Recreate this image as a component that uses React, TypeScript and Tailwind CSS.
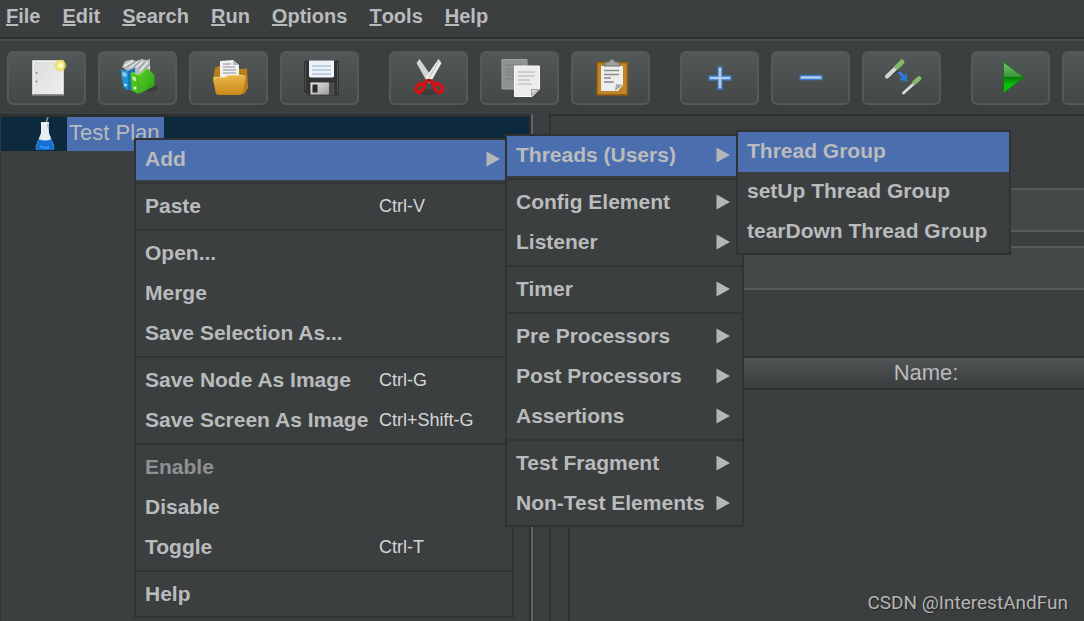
import { Fragment, type ReactNode } from 'react';

type MenuEntry = {
  label: string;
  shortcut?: string;
  submenu?: boolean;
  active?: boolean;
  disabled?: boolean;
};

const menuBar = ['File', 'Edit', 'Search', 'Run', 'Options', 'Tools', 'Help'];

// Each inner array is a block of entries; blocks are divided by a separator
const contextMenu: MenuEntry[][] = [
  [{ label: 'Add', submenu: true, active: true }],
  [{ label: 'Paste', shortcut: 'Ctrl-V' }],
  [{ label: 'Open...' }, { label: 'Merge' }, { label: 'Save Selection As...' }],
  [
    { label: 'Save Node As Image', shortcut: 'Ctrl-G' },
    { label: 'Save Screen As Image', shortcut: 'Ctrl+Shift-G' }
  ],
  [{ label: 'Enable', disabled: true }, { label: 'Disable' }, { label: 'Toggle', shortcut: 'Ctrl-T' }],
  [{ label: 'Help' }]
];

const addMenu: MenuEntry[][] = [
  [{ label: 'Threads (Users)', submenu: true, active: true }],
  [{ label: 'Config Element', submenu: true }, { label: 'Listener', submenu: true }],
  [{ label: 'Timer', submenu: true }],
  [
    { label: 'Pre Processors', submenu: true },
    { label: 'Post Processors', submenu: true },
    { label: 'Assertions', submenu: true }
  ],
  [{ label: 'Test Fragment', submenu: true }, { label: 'Non-Test Elements', submenu: true }]
];

const threadsMenu: MenuEntry[][] = [
  [{ label: 'Thread Group', active: true }, { label: 'setUp Thread Group' }, { label: 'tearDown Thread Group' }]
];

function Icon({ children }: { children: ReactNode }) {
  return (
    <svg viewBox="0 0 40 40" className="w-10 h-10" fill="none" aria-hidden="true">
      {children}
    </svg>
  );
}

const newIcon = (
  <Icon>
    <defs>
      <linearGradient id="page" x1="0" y1="0" x2="1" y2="1">
        <stop offset="0" stopColor="#dcdcdc" />
        <stop offset="1" stopColor="#f0f0f0" />
      </linearGradient>
      <radialGradient id="glow">
        <stop offset="0" stopColor="#ffffff" />
        <stop offset="0.35" stopColor="#fbf6a0" />
        <stop offset="0.7" stopColor="#e8dc4a" stopOpacity="0.85" />
        <stop offset="1" stopColor="#d8cc40" stopOpacity="0" />
      </radialGradient>
    </defs>
    <path d="M6 3h30v33.5H6z" fill="url(#page)" stroke="#f8f8f6" strokeWidth="1.5" />
    <path d="M5.5 36.5h31" stroke="#8d8f8e" />
    <circle cx="9.5" cy="15" r="1" fill="#888" />
    <circle cx="9.5" cy="23.5" r="1" fill="#888" />
    <circle cx="33.5" cy="7.5" r="6.5" fill="url(#glow)" />
  </Icon>
);

const templatesIcon = (
  <Icon>
    <defs>
      <linearGradient id="binder" x1="0" y1="0" x2="1" y2="1">
        <stop offset="0" stopColor="#5cd32a" />
        <stop offset="1" stopColor="#2b9a10" />
      </linearGradient>
    </defs>
    <ellipse cx="33" cy="30" rx="7" ry="4" fill="#2f3333" opacity="0.6" />
    <path d="M4 9l3-6 7-1.500 4 1.500 6-2 4 1 4-1v18L12 15z" fill="#b4b9ba" />
    <path d="M6 8l9-5M11 10l9-6M18 10l7-7M22 13l8-9M26 15l6-6" stroke="#e9ecec" strokeWidth="1.500" />
    <path d="M9 9l8-5M16 8l5-4M20 11l6-6M25 13l6-7" stroke="#8d9496" strokeWidth="0.800" />
    <path d="M2.500 11.500l8 1.500v19.500l-5-3z" fill="#2292d6" />
    <path d="M10 13l7-3.500v15L12 33l-2-1z" fill="#1873b2" />
    <path d="M4.500 14l4 1v4l-4-1z" fill="#8fcdf0" />
    <circle cx="7.500" cy="27" r="1.300" fill="#d8effb" />
    <path d="M12.500 16q0-2 2-1.500l6 2.500v19l-7-3.500z" fill="#46c41c" />
    <path d="M20.500 17L28 11q1-1 2.500 0l5 5q1 1 1 3v9l-16 8z" fill="url(#binder)" />
    <path d="M14 14.500l6.500 2.500L29 10.500" stroke="#86e65c" />
    <path d="M14.500 18l3.500 1.500v4L14.500 22z" fill="#b5f098" />
    <circle cx="17" cy="30" r="1.500" fill="#e7fbdc" />
  </Icon>
);

const openIcon = (
  <Icon>
    <defs>
      <linearGradient id="folder" x1="0" y1="0" x2="0" y2="1">
        <stop offset="0" stopColor="#ebb64a" />
        <stop offset="1" stopColor="#c98a18" />
      </linearGradient>
    </defs>
    <path d="M6 10l6-3 3 4h20l3-1 1 20-4 6H8L4 22z" fill="#b97f1b" />
    <path d="M11 3l13-1 6 5v16H11z" fill="#f1f1f1" />
    <path d="M24 2v5h6z" fill="#b9bcbc" />
    <path d="M14 6h8M14 9h12M14 12h13M14 15h13" stroke="#8c8f90" />
    <path d="M4 21q0-2 2-2h9q2 0 3-1l2-1h14q3 0 2.500 3L34 34q-1 3-3 3H10q-3 0-3.500-3z" fill="url(#folder)" />
    <path d="M5 21q0-1.500 2-1.500h9l4-2h14" stroke="#f3d080" />
  </Icon>
);

const saveIcon = (
  <Icon>
    <defs>
      <linearGradient id="shutter" x1="0" y1="0" x2="1" y2="1">
        <stop offset="0" stopColor="#e8e8e8" />
        <stop offset="1" stopColor="#9c9c9c" />
      </linearGradient>
    </defs>
    <path d="M6 2.500h31q2 0 2 2v31q0 2-2 2H8l-4-4v-29q0-2 2-2z" fill="#303233" />
    <path d="M5.500 5v27M37.500 5v30" stroke="#505354" />
    <path d="M9 2.500h25V18q0 1.500-2 1.500H11q-2 0-2-1.500z" fill="#eef4fa" />
    <path d="M12 8h19M12 12h19M12 16h19" stroke="#8fa9c4" strokeWidth="1.200" />
    <path d="M10.500 24.500h24v12.500h-24z" fill="#4a4c4d" />
    <path d="M10.500 24.500h18.500v12h-18.500z" fill="url(#shutter)" />
    <path d="M12.500 26.500h5v8h-5z" fill="#29292a" />
  </Icon>
);

const cutIcon = (
  <Icon>
    <ellipse cx="20" cy="34" rx="11" ry="3" fill="#343838" opacity="0.7" />
    <path d="M7.500 5l3-4L23 19l-2 6-4-3z" fill="#d3d5d3" />
    <path d="M32.500 5l-3-4L17 19l2 6 4-3z" fill="#ecedea" />
    <path d="M30 3L20 20" stroke="#b5b8b6" />
    <path d="M18 23l-4 4M22 23l4 4" stroke="#cc1212" strokeWidth="4" strokeLinecap="round" />
    <ellipse cx="11" cy="30" rx="3.500" ry="4.800" transform="rotate(40 11 30)" stroke="#d41414" strokeWidth="3.500" />
    <ellipse cx="29.500" cy="30" rx="3.500" ry="4.800" transform="rotate(-40 29.500 30)" stroke="#d41414" strokeWidth="3.500" />
    <circle cx="20" cy="22" r="1.200" fill="#6d1414" />
  </Icon>
);

const copyIcon = (
  <Icon>
    <path d="M2 1.500h25v29.500H2z" fill="#8e9292" stroke="#a0a3a3" />
    <path d="M6 7h17M6 11h10M6 14h8M6 17h8M6 21h8" stroke="#787c7c" />
    <path d="M14.500 8h25v23l-7.500 7.500H14.500z" fill="#ececea" stroke="#fafafa" />
    <path d="M18 14h17M18 18h17M18 22h12M18 26h14" stroke="#b0b2b1" strokeWidth="1.200" />
    <path d="M31 38.500V31h8.500z" fill="#a2a4a3" />
    <path d="M32 36v-4h5z" fill="#dadbda" />
  </Icon>
);

const pasteIcon = (
  <Icon>
    <path d="M6 4.500h30.500V37H6z" fill="#c0852b" stroke="#8b5a12" strokeWidth="1.500" />
    <path d="M10 8h22v19l-5 6H10z" fill="#eeeeec" />
    <path d="M13 12.500h15M13 16.500h15M13 20h7M13 24h10" stroke="#888b8a" strokeWidth="1.300" />
    <path d="M24 33l1-7 7 1z" fill="#a9abaa" />
    <path d="M13 8q0-3 3-4h2q0-2.500 3-2.500T24 4h2q3 1 3 4z" fill="#9fa29a" stroke="#6d7068" />
  </Icon>
);

const plusIcon = (
  <Icon>
    <path d="M18 9h4v9h9v4h-9v9h-4v-9H9v-4h9z" fill="#b3cdec" stroke="#3b78c6" strokeWidth="1.300" />
  </Icon>
);

const minusIcon = (
  <Icon>
    <path d="M9 17.500h22v4H9z" fill="#b3cdec" stroke="#3b78c6" strokeWidth="1.300" />
  </Icon>
);

const toggleIcon = (
  <Icon>
    <path d="M5 20l12-8M21 37l10-9" stroke="#353a39" strokeWidth="2" opacity="0.5" />
    <path d="M5 18.500L15 9" stroke="#d6d9d7" strokeWidth="4" strokeLinecap="round" />
    <path d="M15 9l5-5" stroke="#85b868" strokeWidth="5" strokeLinecap="round" />
    <path d="M21.500 35L32 25.500" stroke="#d6d9d7" strokeWidth="3" strokeLinecap="round" />
    <path d="M32.500 24.500l4.500-4" stroke="#85b868" strokeWidth="4.500" strokeLinecap="round" />
    <path d="M17 14l5 5.500" stroke="#2f7fe0" strokeWidth="3" />
    <path d="M25.500 23.500l-8-1.500 7-7z" fill="#2877d8" />
  </Icon>
);

const startIcon = (
  <Icon>
    <defs>
      <linearGradient id="play" x1="0" y1="0" x2="0" y2="1">
        <stop offset="0" stopColor="#7cc277" />
        <stop offset="0.48" stopColor="#3a9436" />
        <stop offset="0.5" stopColor="#0a7c0a" />
        <stop offset="0.75" stopColor="#08c408" />
        <stop offset="1" stopColor="#10b810" />
      </linearGradient>
    </defs>
    <path d="M12.500 4l20.500 15.500-20.500 15.500z" fill="url(#play)" stroke="#147a14" />
  </Icon>
);

const toolbar = [
  [
    { label: 'New', icon: newIcon },
    { label: 'Templates', icon: templatesIcon },
    { label: 'Open', icon: openIcon },
    { label: 'Save', icon: saveIcon }
  ],
  [
    { label: 'Cut', icon: cutIcon },
    { label: 'Copy', icon: copyIcon },
    { label: 'Paste', icon: pasteIcon }
  ],
  [
    { label: 'Expand All', icon: plusIcon },
    { label: 'Collapse All', icon: minusIcon },
    { label: 'Toggle', icon: toggleIcon }
  ],
  [
    { label: 'Start', icon: startIcon },
    { label: 'Start no pauses', icon: null }
  ]
];

function FlaskIcon() {
  return (
    <svg viewBox="0 0 20 34" className="w-5 h-[34px] shrink-0" fill="none" aria-hidden="true">
      <path d="M11 6l2-6" stroke="#8f9ba3" strokeWidth="1.500" />
      <path d="M6 5.500h8V16l5 13q1 4-2 4H3q-3 0-2-4l5-13z" fill="#e6ecef" />
      <path d="M11.500 6H14v10l5 13q0 2-1 3z" fill="#b4bfc6" />
      <path d="M3.500 22q6.500 3 13 0l2.500 7.500q.5 3.500-2 3.500H3q-2.500 0-2-3.500z" fill="#1670d2" />
      <path d="M5 29q4 3 9 1" stroke="#3c95ec" strokeWidth="2" />
      <path d="M6 6h8" stroke="#fff" strokeWidth="1.500" />
    </svg>
  );
}

function PopupMenu({ label, blocks, className }: { label: string; blocks: MenuEntry[][]; className: string }) {
  return (
    <div
      role="menu"
      aria-label={label}
      className={`absolute pb-px border-2 border-[#303333] bg-[#3c3f40] text-[21px] font-bold ${className}`}
    >
      {blocks.map((block, index) => (
        <Fragment key={index}>
          {index > 0 && (
            <div role="separator" className="h-[7px] flex items-start pt-0.5">
              <div className="h-0.5 w-full bg-[#323535]" />
            </div>
          )}
          {block.map(entry => (
            <button
              key={entry.label}
              type="button"
              role="menuitem"
              disabled={entry.disabled}
              className={`flex w-full h-10 items-center pl-[9px] pr-3 pb-0.5 text-left whitespace-nowrap ${
                entry.active ? 'bg-[#4b6eaf]' : ''
              } ${entry.disabled ? 'text-[#8f9192]' : 'text-[#b9bbbc]'}`}
            >
              <span className={entry.shortcut ? 'w-[234px]' : 'flex-1'}>{entry.label}</span>
              {entry.shortcut && <span className="text-[18px] font-normal text-[#d4d6d6]">{entry.shortcut}</span>}
              {entry.submenu && (
                <svg viewBox="0 0 14 16" className="w-3.5 h-4" aria-hidden="true">
                  <path d="M0.500 0.500L14 8L0.500 15.500z" fill="#b4b6b7" />
                </svg>
              )}
            </button>
          ))}
        </Fragment>
      ))}
    </div>
  );
}

export default function App() {
  return (
    <div className="relative flex flex-col h-screen overflow-hidden bg-[#3c3f40] text-[#b9bbbc] font-['Liberation_Sans',Arial,sans-serif]">
      {/* Menu bar */}
      <nav className="flex gap-[22px] h-[37px] shrink-0 pl-1.5 pt-1 text-[20px] leading-6 font-bold">
        {menuBar.map(item => (
          <button key={item} type="button" className="flex items-start h-6">
            <span className="underline decoration-2 underline-offset-1">{item[0]}</span>
            {item.slice(1)}
          </button>
        ))}
      </nav>

      {/* Toolbar */}
      <div
        role="toolbar"
        className="flex shrink-0 gap-[30px] border-t-2 border-[#2e3131] pl-[7px] pt-3 pb-[9px] shadow-[inset_0_2px_0_#4b4d4e]"
      >
        {toolbar.map((group, index) => (
          <div key={index} className="flex gap-3 shrink-0">
            {group.map(tool => (
              <button
                key={tool.label}
                type="button"
                aria-label={tool.label}
                className="flex items-center justify-center w-[79px] h-[54px] rounded-md border-2 border-[#545959] bg-linear-to-b from-[#525757] to-[#444948]"
              >
                {tool.icon}
              </button>
            ))}
          </div>
        ))}
      </div>

      {/* Workspace */}
      <main className="flex flex-1 min-h-0">
        <section className="w-[49%] shrink-0 border-t-3 border-r-2 border-t-[#2d3030] border-r-[#2d3030] border-l border-l-[#333637]">
          <div className="flex h-[34px] bg-[#0d293e] pl-[34px]">
            <FlaskIcon />
            <span className="ml-3 pl-0.5 pr-1 bg-[#4b6eaf] text-[22px] leading-8 whitespace-nowrap">Test Plan</span>
          </div>
        </section>
        <div className="w-[18px] shrink-0 border-l-2 border-[#606364]" />
        <section className="flex-1 min-w-0 flex flex-col border-t-2 border-l-2 border-[#2f3233] pt-[72px]">
          <div className="flex flex-col gap-3.5 pl-[120px]">
            <input
              aria-label="Name"
              className="w-full h-11 bg-[#454849] border-y-2 border-[#595c5d] px-2 text-[22px] outline-none"
            />
            <input
              aria-label="Comments"
              className="w-full h-11 bg-[#454849] border-y-2 border-[#595c5d] px-2 text-[22px] outline-none"
            />
          </div>
          <div className="flex-1 mt-[66px] ml-[17px] border-l-2 border-t-2 border-[#2f3233]">
            <table className="w-full">
              <thead>
                <tr>
                  <th className="p-0 pl-[198px] border-b-2 border-[#2f3233] bg-linear-to-b from-[#515556] to-[#3a3d3e] text-[22px] leading-[30px] font-normal">
                    Name:
                  </th>
                </tr>
              </thead>
            </table>
          </div>
        </section>
      </main>

      {/* Popup menus */}
      <PopupMenu label="Test Plan" blocks={contextMenu} className="left-[134px] top-[138px] w-[380px]" />
      <PopupMenu label="Add" blocks={addMenu} className="left-[505px] top-[134px] w-[239px]" />
      <PopupMenu label="Threads (Users)" blocks={threadsMenu} className="left-[736px] top-[130px] w-[275px]" />

      <p className="absolute right-4 bottom-1.5 font-[Roboto,sans-serif] text-[19px] leading-6 text-[#b4b6b7] [text-shadow:1px_1px_1px_#222]">
        CSDN @InterestAndFun
      </p>
    </div>
  );
}
